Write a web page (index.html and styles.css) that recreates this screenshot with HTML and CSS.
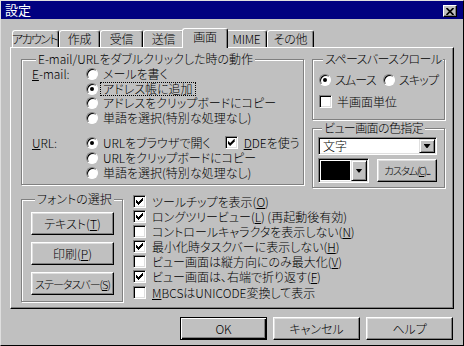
FILE: index.html
```html
<!DOCTYPE html>
<html lang="ja">
<head>
    <meta charset="UTF-8">
    <title>設定</title>
    <link rel="stylesheet" href="styles.css">
</head>
<body>
    <div class="window">
        <div class="titlebar">
            <span class="title">設定</span>
            <span class="close-btn">
                <svg width="8" height="7" viewBox="0 0 8 7"><path d="M0.5 0 L7.5 7 M7.5 0 L0.5 7" stroke="#000" stroke-width="1.7"/></svg>
            </span>
        </div>

        <div class="tabs">
            <span class="tab w47 tight">アカウント</span>
            <span class="tab w41">作成</span>
            <span class="tab w43">受信</span>
            <span class="tab w41">送信</span>
            <span class="tab active">画面</span>
            <span class="tab w41">MIME</span>
            <span class="tab w47">その他</span>
        </div>

        <div class="panel">
            <div class="top-row">
                <fieldset class="group action-group">
                    <legend>E-mail/URLをダブルクリックした時の動作</legend>
                    <div class="link-row">
                        <span class="link-label"><u>E</u>-mail:</span>
                        <div class="options">
                            <div class="opt"><span class="radio"></span><span>メールを書く</span></div>
                            <div class="opt"><span class="radio checked"></span><span class="focus">アドレス帳に追加</span></div>
                            <div class="opt"><span class="radio"></span><span>アドレスをクリップボードにコピー</span></div>
                            <div class="opt"><span class="radio"></span><span>単語を選択(特別な処理なし)</span></div>
                        </div>
                    </div>
                    <div class="link-row url-row">
                        <span class="link-label"><u>U</u>RL:</span>
                        <div class="options">
                            <div class="opt">
                                <span class="radio checked"></span><span>URLをブラウザで開く</span>
                                <span class="check checked dde"></span><span><u>D</u>DEを使う</span>
                            </div>
                            <div class="opt"><span class="radio"></span><span>URLをクリップボードにコピー</span></div>
                            <div class="opt"><span class="radio"></span><span>単語を選択(特別な処理なし)</span></div>
                        </div>
                    </div>
                </fieldset>

                <div class="side">
                    <fieldset class="group scroll-group">
                        <legend>スペースバースクロール</legend>
                        <div class="scroll-opts">
                            <span class="opt"><span class="radio checked"></span><span>スムース</span></span>
                            <span class="opt"><span class="radio"></span><span>スキップ</span></span>
                        </div>
                        <div class="opt half"><span class="check"></span><span>半画面単位</span></div>
                    </fieldset>

                    <fieldset class="group color-group">
                        <legend>ビュー画面の色指定</legend>
                        <div class="combo">
                            <span class="combo-text">文字</span>
                            <span class="drop"></span>
                        </div>
                        <div class="color-row">
                            <div class="combo swatch">
                                <span class="swatch-fill"></span>
                                <span class="drop"></span>
                            </div>
                            <button class="btn custom">カスタム(<u>C</u>)...</button>
                        </div>
                    </fieldset>
                </div>
            </div>

            <div class="bottom-row">
                <fieldset class="group font-group">
                    <legend>フォントの選択</legend>
                    <button class="btn">テキスト(<u>T</u>)</button>
                    <button class="btn">印刷(<u>P</u>)</button>
                    <button class="btn narrow">ステータスバー(<u>S</u>)</button>
                </fieldset>

                <div class="checks">
                    <div class="opt"><span class="check checked"></span><span>ツールチップを表示(<u>O</u>)</span></div>
                    <div class="opt"><span class="check checked"></span><span>ロングツリービュー(<u>L</u>) (再起動後有効)</span></div>
                    <div class="opt"><span class="check"></span><span>コントロールキャラクタを表示しない(<u>N</u>)</span></div>
                    <div class="opt"><span class="check checked"></span><span>最小化時タスクバーに表示しない(<u>H</u>)</span></div>
                    <div class="opt"><span class="check"></span><span>ビュー画面は縦方向にのみ最大化(<u>V</u>)</span></div>
                    <div class="opt"><span class="check checked"></span><span>ビュー画面は、右端で折り返す(<u>F</u>)</span></div>
                    <div class="opt last"><span class="check"></span><span><u>M</u>BCSはUNICODE変換して表示</span></div>
                </div>
            </div>
        </div>

        <div class="buttons">
            <button class="btn default">OK</button>
            <button class="btn">キャンセル</button>
            <button class="btn">ヘルプ</button>
        </div>
    </div>
</body>
</html>
```

FILE: styles.css
```css
* {
    box-sizing: border-box;
}

body {
    margin: 0;
    background: #c0c0c0;
    font-family: "Noto Sans CJK JP", sans-serif;
    font-size: 12px;
    font-weight: 300;
    font-feature-settings: "palt";
    color: #000;
}

u {
    text-underline-offset: 1px;
}

.window {
    width: 464px;
    height: 346px;
    background: #c0c0c0;
    border: 1px solid;
    border-color: #dfdfdf #000 #000 #dfdfdf;
}

/* タイトルバー */
.titlebar {
    height: 18px;
    background: #000080;
    color: #fff;
    display: flex;
    align-items: center;
    justify-content: space-between;
    padding: 0 6px 0 4px;
    line-height: 14px;
    font-size: 13px;
    font-weight: 400;
}

.close-btn {
    width: 14px;
    height: 12px;
    margin-top: 2px;
    background: #c0c0c0;
    border: 1px solid;
    border-color: #fff #000 #000 #fff;
    box-shadow: inset -1px -1px #808080;
    display: flex;
    align-items: center;
    justify-content: center;
}

/* タブ */
.tabs {
    display: flex;
    align-items: flex-end;
    height: 19px;
    margin: 9px 0 0 9px;
    padding-left: 2px;
}

.tab {
    height: 17px;
    text-align: center;
    white-space: nowrap;
    letter-spacing: -0.3px;
    line-height: 16px;
    border: 1px solid;
    border-bottom: none;
    border-color: #fff #000 #000 #fff;
    border-radius: 3px 3px 0 0;
    box-shadow: inset -1px 0 #808080;
    background: #c0c0c0;
}

.w41 { width: 41px; }
.w43 { width: 43px; }
.w47 { width: 47px; }

.tab.tight {
    letter-spacing: -1.6px;
    text-indent: -2px;
}

.tab.active {
    position: relative;
    z-index: 1;
    width: 46px;
    height: 20px;
    margin: 0 -2px -1px;
    padding-bottom: 3px;
}

.panel {
    width: 444px;
    height: 262px;
    margin-left: 9px;
    border: 1px solid;
    border-color: #fff #000 #000 #fff;
    box-shadow: inset -1px -1px #808080;
    padding: 5px 8px 0 10px;
}

/* グループ枠 */
.group {
    margin: 0;
    min-width: 0;
    border: 1px solid #808080;
    box-shadow: inset 1px 1px #fff, 1px 1px #fff;
    padding: 0;
}

.group legend {
    margin-left: 4px;
    padding: 0 2px;
    line-height: 12px;
    white-space: nowrap;
    background: #c0c0c0;
}

.top-row {
    display: flex;
    gap: 8px;
    align-items: flex-start;
}

.opt {
    display: flex;
    align-items: center;
    gap: 5px;
    white-space: nowrap;
}

.action-group {
    width: 283px;
    padding: 2px 0 4px 10px;
}

.link-row {
    display: flex;
}

.link-label {
    width: 54px;
    line-height: 14.5px;
}

.link-row .opt {
    height: 14.5px;
    line-height: 14.5px;
}

.url-row {
    margin-top: 10px;
}

.url-row .opt,
.url-row .link-label {
    height: 15px;
    line-height: 15px;
}

.focus {
    margin-left: -3px;
    padding: 0 2px;
    border: 1px dotted #000;
    line-height: 12px;
}

.dde {
    margin-left: 9px;
    margin-right: 1px;
}

.side {
    width: 133px;
}

.side legend {
    letter-spacing: -0.6px;
}

.scroll-group {
    padding: 7px 0 10px 6px;
}

.scroll-opts {
    display: flex;
    gap: 7px;
}

.scroll-opts .opt {
    height: 15px;
    line-height: 15px;
    gap: 4px;
    letter-spacing: -0.8px;
}

.half {
    height: 15px;
    line-height: 15px;
    margin-top: 7px;
    gap: 5px;
}

.color-group {
    margin-top: 2px;
    padding: 3px 7px 4px 5px;
}

.combo {
    height: 18px;
    display: flex;
    align-items: stretch;
    background: #fff;
    border: 1px solid;
    border-color: #808080 #fff #fff #808080;
    box-shadow: inset 1px 1px #000, inset -1px -1px #dfdfdf;
    padding: 1px;
}

.combo-text {
    flex: 1;
    padding-left: 3px;
    line-height: 14px;
}

.drop {
    width: 16px;
    background: #c0c0c0;
    border: 1px solid;
    border-color: #dfdfdf #000 #000 #dfdfdf;
    box-shadow: inset 1px 1px #fff, inset -1px -1px #808080;
    display: flex;
    align-items: center;
    justify-content: center;
}

.drop::after {
    content: "";
    width: 7px;
    height: 4px;
    background: #000;
    clip-path: polygon(0 0, 7px 0, 4px 4px, 3px 4px);
}

.color-row {
    display: flex;
    align-items: center;
    justify-content: space-between;
    margin-top: 3px;
}

.swatch {
    width: 51px;
    height: 25px;
}

.swatch-fill {
    flex: 1;
    background: #000;
    border: 1px solid #fff;
}

/* ボタン */
.btn {
    font: inherit;
    font-feature-settings: "palt";
    white-space: nowrap;
    color: #000;
    background: #c0c0c0;
    border: 1px solid;
    border-color: #fff #000 #000 #fff;
    box-shadow: inset -1px -1px #808080, inset 1px 1px #dfdfdf;
    padding: 0;
    height: 23px;
    line-height: 18px;
}

.btn.default {
    border-color: #000;
    box-shadow: inset 1px 1px #fff, inset -1px -1px #000, inset -2px -2px #808080;
}

.custom {
    width: 60px;
    font-size: 10.5px;
    letter-spacing: -1.4px;
    overflow: visible;
}

.bottom-row {
    display: flex;
    gap: 10px;
    align-items: flex-start;
    margin-top: 5px;
}

.font-group {
    width: 102px;
    padding: 7px 8px 6px 9px;
    display: flex;
    flex-direction: column;
    gap: 7px;
}

.font-group .btn {
    width: 83px;
}

.font-group .narrow {
    font-size: 11px;
    letter-spacing: -1px;
}

.checks {
    margin-top: 1px;
}

.checks .opt {
    height: 15px;
    line-height: 15px;
    gap: 6px;
}

.checks .last {
    margin-top: 1px;
}

/* ラジオ・チェック */
.radio {
    position: relative;
    flex: none;
    width: 12px;
    height: 12px;
    border-radius: 50%;
    background: #fff;
    border: 1px solid;
    border-color: #808080 #fff #fff #808080;
    box-shadow: inset 1px 1px #000;
}

.radio.checked::after {
    content: "";
    position: absolute;
    left: 3px;
    top: 3px;
    width: 4px;
    height: 4px;
    border-radius: 50%;
    background: #000;
}

.check {
    position: relative;
    flex: none;
    width: 13px;
    height: 13px;
    background: #fff;
    border: 1px solid;
    border-color: #808080 #fff #fff #808080;
    box-shadow: inset 1px 1px #000, inset -1px -1px #dfdfdf;
}

.check.checked::after {
    content: "";
    position: absolute;
    left: 2px;
    top: 2px;
    width: 7px;
    height: 7px;
    background: #000;
    clip-path: polygon(6px 0, 7px 0, 7px 3px, 6px 3px, 6px 4px, 5px 4px, 5px 5px, 4px 5px, 4px 6px, 3px 6px, 3px 7px, 2px 7px, 2px 6px, 1px 6px, 1px 5px, 0 5px, 0 2px, 1px 2px, 1px 3px, 2px 3px, 2px 4px, 3px 4px, 3px 3px, 4px 3px, 4px 2px, 5px 2px, 5px 1px, 6px 1px);
}

.buttons {
    display: flex;
    justify-content: flex-end;
    gap: 6px;
    margin-top: 8px;
    padding-right: 10px;
}

.buttons .btn {
    width: 87px;
}
```
